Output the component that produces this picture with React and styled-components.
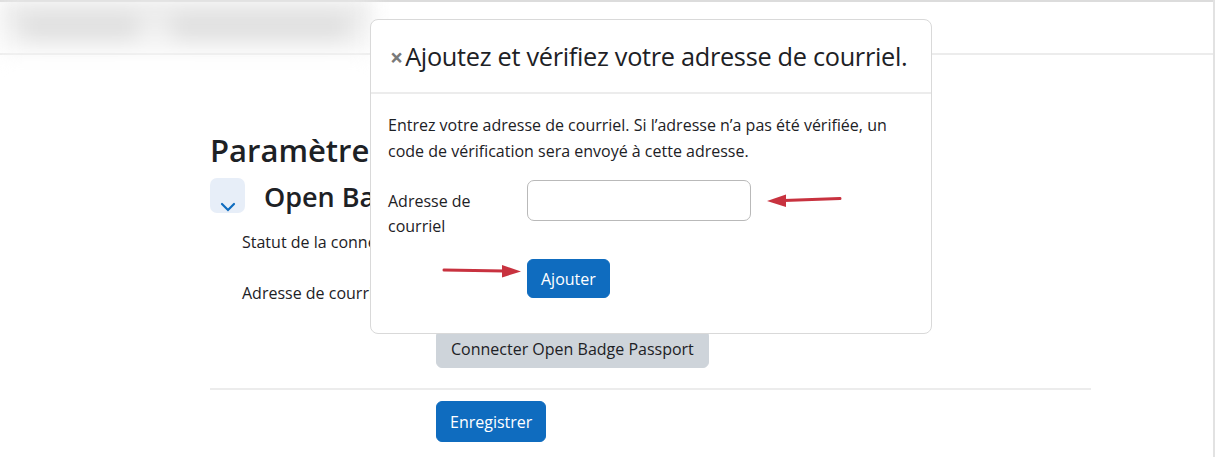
import styled, { createGlobalStyle } from "styled-components";

const GlobalStyle = createGlobalStyle`
    html, body {
        margin: 0;
        padding: 0;
        background: #fff;
        font-family: "Open Sans", "Noto Sans", sans-serif;
        color: #1d2125;
    }
`;

const RedArrow = ({ dir }) => (
    <svg width="80" height="14" viewBox="0 0 80 14">
        {dir === "left" ? (
            <>
                <path d="M18 7.5 L74 5.5" stroke="#c8323f" strokeWidth="3" strokeLinecap="round" fill="none" />
                <path d="M1 8 L20 1.5 L20 14 Z" fill="#c8323f" />
            </>
        ) : (
            <>
                <path d="M2 6 L62 7" stroke="#c8323f" strokeWidth="3" strokeLinecap="round" fill="none" />
                <path d="M79 7.5 L60 1 L60 13.5 Z" fill="#c8323f" />
            </>
        )}
    </svg>
);

const App = () => {
    return (
        <Page>
            <GlobalStyle />
            <Navbar>
                <BlurredBrand>
                    <Blob $w={120} />
                    <Blob $w={180} />
                </BlurredBrand>
            </Navbar>
            <Main>
                <Clip>
                    <PageTitle>Paramètres</PageTitle>
                </Clip>
                <SectionHeader>
                    <Toggle>
                        <svg width="16" height="10" viewBox="0 0 16 10">
                            <path d="M2 2 L8 8 L14 2" stroke="#0f6cbf" strokeWidth="2.2" fill="none" strokeLinecap="round" />
                        </svg>
                    </Toggle>
                    <Clip $w={106}>
                        <SectionTitle>Open Ba</SectionTitle>
                    </Clip>
                </SectionHeader>
                <FormRow>
                    <Label>Statut de la conne</Label>
                </FormRow>
                <FormRow>
                    <Label>Adresse de courri</Label>
                </FormRow>
                <ButtonRow>
                    <Button $variant="secondary">Connecter Open Badge Passport</Button>
                </ButtonRow>
                <Divider />
                <ButtonRow>
                    <Button $tall>Enregistrer</Button>
                </ButtonRow>
            </Main>

            <Modal>
                <ModalHeader>
                    <Close>×</Close>
                    <ModalTitle>Ajoutez et vérifiez votre adresse de courriel.</ModalTitle>
                </ModalHeader>
                <ModalBody>
                    <Intro>
                        Entrez votre adresse de courriel. Si l’adresse n’a pas été vérifiée, un
                        code de vérification sera envoyé à cette adresse.
                    </Intro>
                    <ModalRow>
                        <ModalLabel>Adresse de courriel</ModalLabel>
                        <InputWrap>
                            <Input type="text" />
                            <ArrowLeft>
                                <RedArrow dir="left" />
                            </ArrowLeft>
                        </InputWrap>
                    </ModalRow>
                    <ModalRow>
                        <ArrowCell>
                            <RedArrow dir="right" />
                        </ArrowCell>
                        <div>
                            <Button>Ajouter</Button>
                        </div>
                    </ModalRow>
                </ModalBody>
            </Modal>
        </Page>
    );
};

const Page = styled.div`
    position: relative;
    width: 1215px;
    height: 457px;
    overflow: hidden;
    border-right: 2px solid #e2e2e2;
    box-sizing: border-box;
`;

const Navbar = styled.header`
    height: 55px;
    border-top: 2px solid #dcdcdc;
    border-bottom: 2px solid #ececec;
    box-sizing: border-box;
    display: flex;
`;

const BlurredBrand = styled.div`
    width: 372px;
    height: 53px;
    margin-top: -2px;
    background: linear-gradient(#e8e8e8, #f7f7f7);
    display: flex;
    align-items: center;
    gap: 30px;
    padding-left: 20px;
    box-sizing: border-box;
    filter: blur(10px);
`;

const Blob = styled.div`
    width: ${(p) => p.$w}px;
    height: 26px;
    background: #e0e0e0;
    border-radius: 13px;
`;

const Main = styled.main`
    width: 881px;
    margin-left: 210px;
    padding-top: 73px;
`;

const Clip = styled.div`
    width: ${(p) => p.$w || 160}px;
    overflow: hidden;
`;

const PageTitle = styled.h2`
    margin: 0;
    font-size: 31px;
    font-weight: 600;
    line-height: 44px;
    white-space: nowrap;
`;

const SectionHeader = styled.div`
    display: flex;
    align-items: center;
    gap: 19px;
    margin-top: 2px;
`;

const Toggle = styled.div`
    width: 35px;
    height: 35px;
    border-radius: 7px;
    background: #e7eef8;
    display: flex;
    align-items: flex-end;
    justify-content: center;
    padding-bottom: 1px;
    box-sizing: border-box;
`;

const SectionTitle = styled.h3`
    margin: 4px 0 0;
    font-size: 27px;
    font-weight: 600;
    line-height: 38px;
    white-space: nowrap;
`;

const FormRow = styled.div`
    display: grid;
    grid-template-columns: 194px 1fr;
    padding-left: 32px;
    min-height: 51px;
    align-items: center;
    font-size: 16px;
    &:first-of-type {
        margin-top: 18px;
    }
`;

const Label = styled.div`
    white-space: nowrap;
`;

const ButtonRow = styled.div`
    padding-left: 226px;
    margin-top: 12px;
`;

const Divider = styled.hr`
    border: 0;
    border-top: 2px solid #ececec;
    margin: 20px 0 -1px;
`;

const Button = styled.button`
    font-family: inherit;
    font-size: 16px;
    height: ${(p) => (p.$variant === "secondary" ? 38 : p.$tall ? 41 : 39)}px;
    padding: 0 ${(p) => (p.$variant === "secondary" ? 14 : 13)}px;
    border-radius: 6px;
    border: 1px solid ${(p) => (p.$variant === "secondary" ? "#ced4da" : "#0f6cbf")};
    background: ${(p) => (p.$variant === "secondary" ? "#ced4da" : "#0f6cbf")};
    color: ${(p) => (p.$variant === "secondary" ? "#1d2125" : "#fff")};
    cursor: pointer;
`;

const Modal = styled.div`
    position: absolute;
    left: 370px;
    top: 19px;
    width: 562px;
    height: 315px;
    box-sizing: border-box;
    background: #fff;
    border: 1px solid #d9d9d9;
    border-radius: 8px;
    display: flex;
    flex-direction: column;
`;

const ModalHeader = styled.div`
    height: 74px;
    border-bottom: 2px solid #ececec;
    box-sizing: border-box;
    display: flex;
    align-items: center;
    padding: 0 18px 0 19px;
`;

const Close = styled.span`
    color: #7a7a7a;
    font-size: 23px;
    font-weight: 700;
    line-height: 1;
    margin-top: 3px;
    margin-right: 2px;
`;

const ModalTitle = styled.h5`
    margin: 0;
    font-size: 25.3px;
    font-weight: 500;
    letter-spacing: -0.3px;
    white-space: nowrap;
`;

const ModalBody = styled.div`
    padding: 18px 17px 0 17px;
`;

const Intro = styled.p`
    margin: 0;
    font-size: 16px;
    line-height: 26px;
`;

const ModalRow = styled.div`
    display: grid;
    grid-template-columns: 139px 1fr;
    align-items: start;
    margin-top: 16px;
    &:last-child {
        margin-top: 20px;
    }
`;

const ModalLabel = styled.div`
    font-size: 16px;
    line-height: 25px;
    width: 100px;
    padding-top: 9px;
`;

const InputWrap = styled.div`
    display: flex;
    align-items: center;
    gap: 16px;
`;

const Input = styled.input`
    width: 224px;
    height: 41px;
    box-sizing: border-box;
    border: 1.5px solid #b9b9b9;
    border-radius: 7px;
    font-size: 16px;
`;

const ArrowLeft = styled.div`
    display: flex;
    margin-top: -2px;
    margin-left: -1px;
`;

const ArrowCell = styled.div`
    display: flex;
    justify-content: flex-end;
    padding-right: 5px;
    padding-top: 5px;
`;

export default App;
